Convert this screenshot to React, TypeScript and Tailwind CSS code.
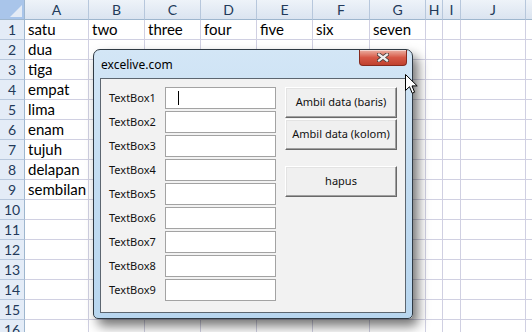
import React from "react";

const columns = [
  { label: "A", cls: "w-[64px]" },
  { label: "B", cls: "w-[56px]" },
  { label: "C", cls: "w-[56px]" },
  { label: "D", cls: "w-[56px]" },
  { label: "E", cls: "w-[56px]" },
  { label: "F", cls: "w-[57px]" },
  { label: "G", cls: "w-[56px]" },
  { label: "H", cls: "w-[17px]" },
  { label: "I", cls: "w-[18px]" },
  { label: "J", cls: "w-[65px]" },
  { label: "", cls: "w-[40px]" },
];

const cellData: Record<number, string[]> = {
  1: ["satu", "two", "three", "four", "five", "six", "seven"],
  2: ["dua"],
  3: ["tiga"],
  4: ["empat"],
  5: ["lima"],
  6: ["enam"],
  7: ["tujuh"],
  8: ["delapan"],
  9: ["sembilan"],
};

const rows = Array.from({ length: 16 }, (_, i) => i + 1);
const textBoxes = Array.from({ length: 9 }, (_, i) => i + 1);

function Sheet() {
  return (
    <div className="flex flex-col font-['Lato',sans-serif]">
      <div className="flex h-[20px] shrink-0">
        <div className="relative w-[25px] shrink-0 border-r border-b border-[#9eb6ce] bg-[#a9c5ea]">
          <svg className="absolute right-[2px] bottom-[2px]" width="12" height="12" viewBox="0 0 12 12">
            <path d="M12 0 L12 12 L0 12 Z" fill="#e4ebf5" />
          </svg>
        </div>
        {columns.map((c) => (
          <div
            key={c.label + c.cls}
            className={`${c.cls} shrink-0 flex items-center justify-center border-r border-b border-r-[#b7c7dc] border-b-[#9eb6ce] bg-gradient-to-b from-[#eef3f9] to-[#dbe4f0] text-[14px] text-[#233a5a]`}
          >
            {c.label}
          </div>
        ))}
      </div>
      {rows.map((r) => (
        <div key={r} className="flex h-[20px] shrink-0">
          <div className="w-[25px] shrink-0 flex items-center justify-center border-r border-b border-r-[#9eb6ce] border-b-[#b7c7dc] bg-[#e4ecf7] text-[14px] text-[#233a5a]">
            {r}
          </div>
          {columns.map((c, ci) => (
            <div
              key={c.label + c.cls}
              className={`${c.cls} shrink-0 flex items-center overflow-visible whitespace-nowrap border-r border-b border-[#d0d0e2] pl-[3px] text-[15px] text-black`}
            >
              {cellData[r]?.[ci] ?? ""}
            </div>
          ))}
        </div>
      ))}
    </div>
  );
}

function CloseButton() {
  return (
    <div className="absolute right-[5px] top-0 flex h-[16px] w-[48px] items-center justify-center rounded-b-[4px] border border-t-0 border-[#862a1e] bg-gradient-to-b from-[#eab0a4] via-[#d65846] to-[#c0412e] shadow-[inset_0_1px_0_rgba(255,255,255,0.5)]">
      <svg width="12" height="9" viewBox="0 0 12 9">
        <path
          d="M2 1.5 L10 7.5 M10 1.5 L2 7.5"
          stroke="#4a3a38"
          strokeWidth="4"
          strokeLinecap="square"
        />
        <path
          d="M2 1.5 L10 7.5 M10 1.5 L2 7.5"
          stroke="#eeeeee"
          strokeWidth="2.2"
          strokeLinecap="square"
        />
      </svg>
    </div>
  );
}

function UserForm() {
  return (
    <div className="absolute left-[93px] top-[49px] flex h-[270px] w-[320px] flex-col rounded-t-[7px] rounded-b-[5px] border border-[#2f3a44] bg-gradient-to-b from-[#d3e6f6] via-[#c2dcf1] to-[#b8d6ef] shadow-[5px_7px_12px_rgba(0,0,0,0.55)]">
      <CloseButton />
      <div className="flex h-[28px] shrink-0 items-center pl-[7px] pt-[2px] font-['Noto_Sans',sans-serif] text-[12px] text-black">
        excelive.com
      </div>
      <div className="mx-[6px] mb-[5px] flex flex-1 items-start border border-[#5c6670] bg-[#f2f2f2] pl-[8px] pt-[8px] font-['Noto_Sans',sans-serif] text-[11px] text-[#111]">
        <div className="flex flex-col gap-[2px]">
          {textBoxes.map((n) => (
            <div key={n} className="flex h-[22px] items-center">
              <span className="w-[56px]">TextBox{n}</span>
              <div className="relative h-[22px] w-[111px] border border-[#a3a3a3] bg-white">
                {n === 1 && (
                  <div className="absolute left-[12px] top-[3px] h-[14px] w-px bg-black" />
                )}
              </div>
            </div>
          ))}
        </div>
        <div className="ml-[9px] flex flex-col">
          <FormButton label="Ambil data (baris)" />
          <div className="h-px" />
          <FormButton label="Ambil data (kolom)" />
          <div className="h-[16px]" />
          <FormButton label="hapus" />
        </div>
      </div>
    </div>
  );
}

function FormButton({ label }: { label: string }) {
  return (
    <div className="flex h-[31px] w-[112px] items-center justify-center border border-t-white border-l-white border-r-[#696969] border-b-[#696969] bg-[#f0f0f0] shadow-[inset_-1px_-1px_0_#a0a0a0,inset_1px_1px_0_#e3e3e3]">
      {label}
    </div>
  );
}

function Cursor() {
  return (
    <svg
      className="absolute left-[405px] top-[74px]"
      width="13"
      height="21"
      viewBox="0 0 13 21"
    >
      <path
        d="M0.5 0.5 L0.5 16.5 L4.5 12.7 L7.2 19.2 L9.6 18.2 L7 11.9 L12.2 11.9 Z"
        fill="#ffffff"
        stroke="#000000"
        strokeWidth="1"
        strokeLinejoin="miter"
      />
    </svg>
  );
}

export default function App() {
  return (
    <div className="relative h-[332px] w-[532px] overflow-hidden bg-white">
      <Sheet />
      <UserForm />
      <Cursor />
    </div>
  );
}
